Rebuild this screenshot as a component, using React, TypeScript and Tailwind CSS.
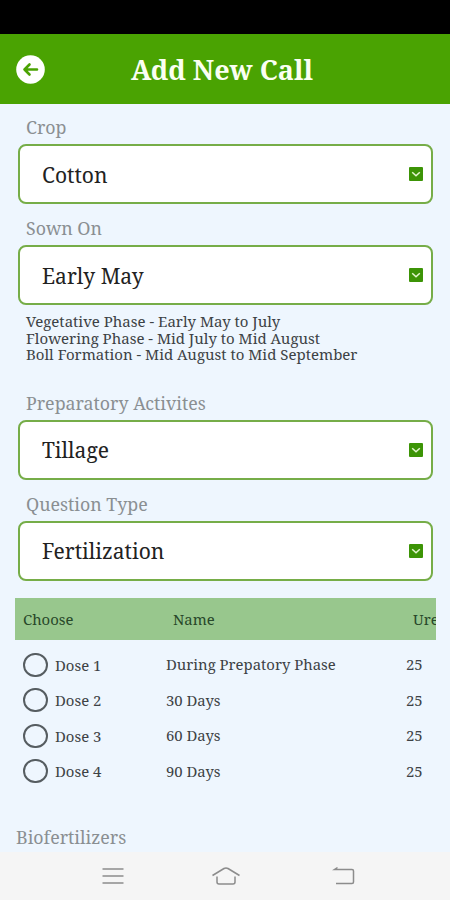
import { useState } from 'react';

const doses = [
  { label: 'Dose 1', name: 'During Prepatory Phase', urea: 25 },
  { label: 'Dose 2', name: '30 Days', urea: 25 },
  { label: 'Dose 3', name: '60 Days', urea: 25 },
  { label: 'Dose 4', name: '90 Days', urea: 25 },
];

const SelectField = ({ label, value }: { label: string; value: string }) => (
  <div className="w-[415px] ml-[18px]">
    <p className="h-[35px] pl-2 text-[17.8px] leading-[37px] text-[#8a8f92]">{label}</p>
    <button
      type="button"
      className="flex h-[60px] w-full items-center justify-between rounded-[8px] border-2 border-[#76ad48] bg-white pl-[22px] pr-2 text-left text-[21px] text-[#222]"
    >
      <span className="pt-[3px]">{value}</span>
      <svg width="14" height="14" viewBox="0 0 14 14" fill="none">
        <rect width="14" height="14" rx="1" fill="#3c9406" />
        <path d="M3.2 5.2 7 8.8l3.8-3.6" stroke="#e4f5cf" strokeWidth="1.5" />
      </svg>
    </button>
  </div>
);

const App = () => {
  const [selected, setSelected] = useState('');

  return (
    <div className="flex h-[900px] w-[450px] flex-col overflow-hidden bg-[#eef6fe] font-['Noto_Serif','DejaVu_Serif',serif]">
      {/* Status bar */}
      <div className="h-[34px] shrink-0 bg-black" />

      <header className="grid h-[70px] shrink-0 grid-cols-[60px_1fr_60px] items-center bg-[#4aa302]">
        <button type="button" className="ml-4">
          <svg width="29" height="29" viewBox="0 0 29 29" fill="none">
            <circle cx="14.5" cy="14.5" r="14.3" fill="#fff" />
            <path d="M21 14.5H8.5M13.5 9.5 8.5 14.5l5 5" stroke="#4aa302" strokeWidth="2.6" strokeLinecap="round" strokeLinejoin="round" />
          </svg>
        </button>
        <h1 className="-ml-1.5 whitespace-nowrap pt-0.5 text-center text-[27px] font-bold text-[#fafff2]">Add New Call</h1>
      </header>

      <main className="flex h-[748px] shrink-0 flex-col pt-[5px]">
        <SelectField label="Crop" value="Cotton" />
        <div className="mt-[6px]">
          <SelectField label="Sown On" value="Early May" />
        </div>

        <div className="ml-[26px] mt-2 whitespace-nowrap text-[15px] leading-[16.5px] text-[#3d4245]">
          <p>Vegetative Phase - Early May to July</p>
          <p>Flowering Phase - Mid July to Mid August</p>
          <p>Boll Formation - Mid August to Mid September</p>
        </div>

        <div className="mt-[22px]">
          <SelectField label="Preparatory Activites" value="Tillage" />
        </div>
        <div className="mt-[6px]">
          <SelectField label="Question Type" value="Fertilization" />
        </div>

        <div className="ml-[15px] mt-[17px] w-[421px] overflow-hidden text-[14.9px] text-[#3d4245]">
          <div className="grid h-[42px] grid-cols-[150px_240px_60px] items-center bg-[#98c78d] pl-2 pt-px text-[#28482a]">
            <span>Choose</span>
            <span>Name</span>
            <span>Urea</span>
          </div>
          <div className="pt-[7px]">
            {doses.map((dose) => (
              <label key={dose.label} className="grid h-[35.5px] grid-cols-[143px_240px_38px] items-center pl-2">
                <span className="flex items-center gap-2">
                  <input
                    type="radio"
                    name="dose"
                    checked={selected === dose.label}
                    onChange={() => setSelected(dose.label)}
                    className="mt-px h-6 w-[25px] appearance-none rounded-full border-2 border-[#565d61] checked:bg-[#4aa302]"
                  />
                  <span className="-ml-px pt-px">{dose.label}</span>
                </span>
                <span>{dose.name}</span>
                <span>{dose.urea}</span>
              </label>
            ))}
          </div>
        </div>

        <p className="ml-4 mt-[36px] text-[17.8px] leading-[24px] text-[#8a8f92]">Biofertilizers</p>
      </main>

      {/* System navigation */}
      <nav className="grid h-[48px] shrink-0 grid-cols-[113px_113px_122px] items-center justify-center bg-[#f5f5f5] pl-2.5">
        <svg className="mx-auto" width="22" height="18" viewBox="0 0 22 18" stroke="#8c8c8c" strokeWidth="1.5">
          <path d="M.5 2h21M.5 9h21M.5 16h21" />
        </svg>
        <svg className="mx-auto" width="30" height="20" viewBox="0 0 30 20" fill="none" stroke="#8c8c8c" strokeWidth="1.5">
          <path d="M1.5 9.5 13 2.5q2-1.2 4 0l11.5 7M6 10.5V16q0 2 2 2h14q2 0 2-2v-5.5" />
        </svg>
        <svg className="mx-auto" width="24" height="20" viewBox="0 0 24 20" fill="none" stroke="#8c8c8c" strokeWidth="1.5">
          <path d="M6.500 1.500 3.500 3.500H21q1.500 0 1.500 1.500v11q0 1.500-1.500 1.500H5" />
        </svg>
      </nav>
    </div>
  );
};

export default App;
